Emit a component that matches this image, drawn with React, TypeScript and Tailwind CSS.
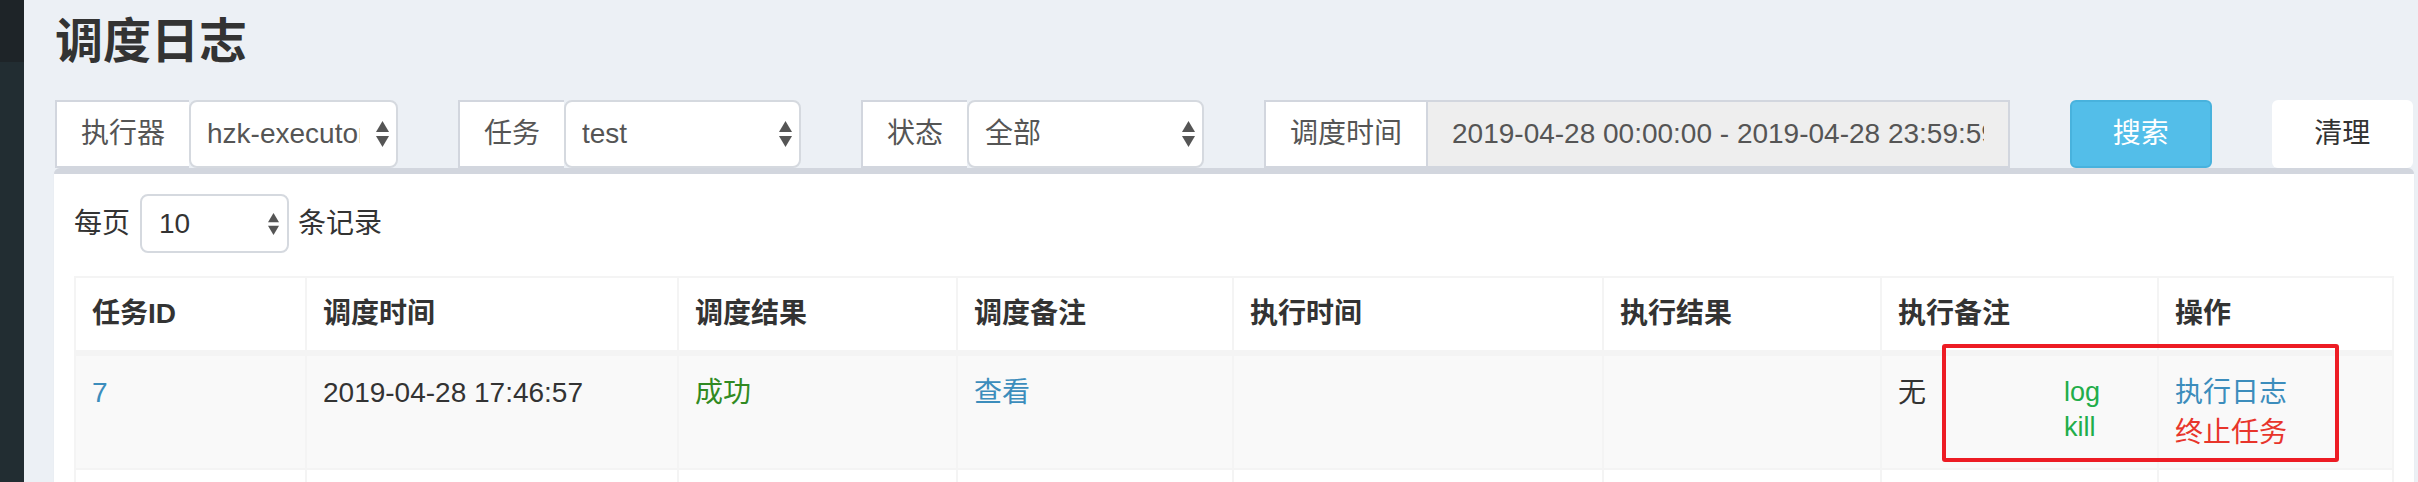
import React from "react";

const font = "font-['Liberation_Sans','Noto_Sans_CJK_SC',sans-serif]";

function Arrows({ small }: { small?: boolean }) {
  const w = small ? 11 : 13;
  const h = small ? 22 : 26;
  return (
    <svg width={w} height={h} viewBox="0 0 13 26" className="shrink-0">
      <path d="M6.5 0 L13 11 H0 Z" fill="#555" />
      <path d="M0 15 H13 L6.5 26 Z" fill="#555" />
    </svg>
  );
}

function FilterSelect({ label, value, gap = "mr-[10px]" }: { label: string; value: string; gap?: string }) {
  return (
    <div className="flex h-[68px]">
      <div className="flex items-center border-2 border-r-0 border-[#d2d6de] bg-white px-[24px] text-[#555]">{label}</div>
      <div className="flex min-w-0 flex-1 items-center rounded-[8px] border-2 border-[#d5d9df] bg-white pl-[16px] pr-[7px]">
        <span className={`${gap} min-w-0 flex-1 overflow-hidden whitespace-nowrap text-[#555]`}>{value}</span>
        <Arrows />
      </div>
    </div>
  );
}

const headers = ["任务ID", "调度时间", "调度结果", "调度备注", "执行时间", "执行结果", "执行备注", "操作"];

export default function App() {
  return (
    <div className={`relative flex h-[482px] w-[2418px] overflow-hidden bg-[#ecf0f5] text-[28px] ${font}`}>
      <aside className="flex w-[24px] shrink-0 flex-col">
        <div className="h-[62px] bg-[#1e2428]" />
        <div className="flex-1 bg-[#222d32]" />
      </aside>

      <main className="min-w-0 flex-1">
        <h1 className="pl-[31px] pt-[18px] text-[48px] font-bold leading-[48px] text-[#333]">调度日志</h1>

        <div className="ml-px mt-[34px] grid grid-cols-[repeat(12,201.5px)] leading-[40px]">
          <div className="col-span-2 px-[30px]">
            <FilterSelect label="执行器" value="hzk-executor" gap="mr-[16px]" />
          </div>
          <div className="col-span-2 px-[30px]">
            <FilterSelect label="任务" value="test" />
          </div>
          <div className="col-span-2 px-[30px]">
            <FilterSelect label="状态" value="全部" />
          </div>
          <div className="col-span-4 px-[30px]">
            <div className="flex h-[68px]">
              <div className="flex items-center border-2 border-r-0 border-[#d2d6de] bg-white px-[24px] text-[#555]">调度时间</div>
              <div className="flex min-w-0 flex-1 items-center border-2 border-[#d2d6de] bg-[#eeeeee] pl-[24px] pr-[24px]">
                <span className="min-w-0 flex-1 overflow-hidden whitespace-nowrap text-[#555]">
                  2019-04-28 00:00:00 - 2019-04-28 23:59:59
                </span>
              </div>
            </div>
          </div>
          <div className="col-span-1 px-[30px]">
            <button className="flex h-[68px] w-full items-center justify-center rounded-[6px] border-2 border-[#48b2dd] bg-[#53bee9] text-white">
              搜索
            </button>
          </div>
          <div className="col-span-1 px-[30px]">
            <button className="flex h-[68px] w-full items-center justify-center rounded-[6px] bg-white text-[#333]">清理</button>
          </div>
        </div>

        <div className="ml-[30px] w-[2360px] rounded-[6px] border-t-[6px] border-[#d2d6de] bg-white px-[20px] pt-[20px] leading-[40px] shadow-[0_1px_1px_rgba(0,0,0,0.1)]">
          <div className="flex h-[59px] items-center text-[#333]">
            <span>每页</span>
            <div className="ml-[10px] flex h-[59px] w-[149px] items-center rounded-[8px] border-2 border-[#d5d9df] bg-white pl-[17px] pr-[8px] text-[#333]">
              <span className="flex-1">10</span>
              <Arrows small />
            </div>
            <span className="ml-[9px]">条记录</span>
          </div>

          <div className="mt-[23px] grid grid-cols-[231px_372px_279px_276px_370px_278px_277px_235px] border-l-2 border-t-2 border-[#f4f4f4] text-[#333]">
            {headers.map((h) => (
              <div key={h} className="border-b-[6px] border-r-2 border-[#f4f4f4] bg-white px-[16px] py-[16px] font-bold">
                {h}
              </div>
            ))}

            <div className="border-b-2 border-r-2 border-[#f4f4f4] bg-[#f9f9f9] px-[16px] pb-[15px] pt-[17px] text-[#3c8dbc]">7</div>
            <div className="border-b-2 border-r-2 border-[#f4f4f4] bg-[#f9f9f9] px-[16px] pb-[15px] pt-[17px]">2019-04-28 17:46:57</div>
            <div className="border-b-2 border-r-2 border-[#f4f4f4] bg-[#f9f9f9] px-[16px] pb-[15px] pt-[17px] text-[#318a22]">成功</div>
            <div className="border-b-2 border-r-2 border-[#f4f4f4] bg-[#f9f9f9] px-[16px] pb-[15px] pt-[17px] text-[#3c8dbc]">查看</div>
            <div className="border-b-2 border-r-2 border-[#f4f4f4] bg-[#f9f9f9] px-[16px] pb-[15px] pt-[17px]" />
            <div className="border-b-2 border-r-2 border-[#f4f4f4] bg-[#f9f9f9] px-[16px] pb-[15px] pt-[17px]" />
            <div className="flex items-start border-b-2 border-r-2 border-[#f4f4f4] bg-[#f9f9f9] px-[16px] pb-[15px] pt-[17px]">
              <span>无</span>
              <div className="ml-[138px] mt-[2px] text-[27px] leading-[35px] text-[#22ad4a]">
                <div>log</div>
                <div>kill</div>
              </div>
            </div>
            <div className="border-b-2 border-r-2 border-[#f4f4f4] bg-[#f9f9f9] px-[16px] pb-[15px] pt-[17px]">
              <div className="text-[#3c8dbc]">执行日志</div>
              <div className="text-[#e8352b]">终止任务</div>
            </div>

            {headers.map((h) => (
              <div key={`r2-${h}`} className="h-[60px] border-r-2 border-[#f4f4f4] bg-white" />
            ))}
          </div>
        </div>
      </main>

      <div className="absolute left-[1942px] top-[344px] h-[118px] w-[397px] rounded-[3px] border-4 border-[#ed1c24]" />
    </div>
  );
}
